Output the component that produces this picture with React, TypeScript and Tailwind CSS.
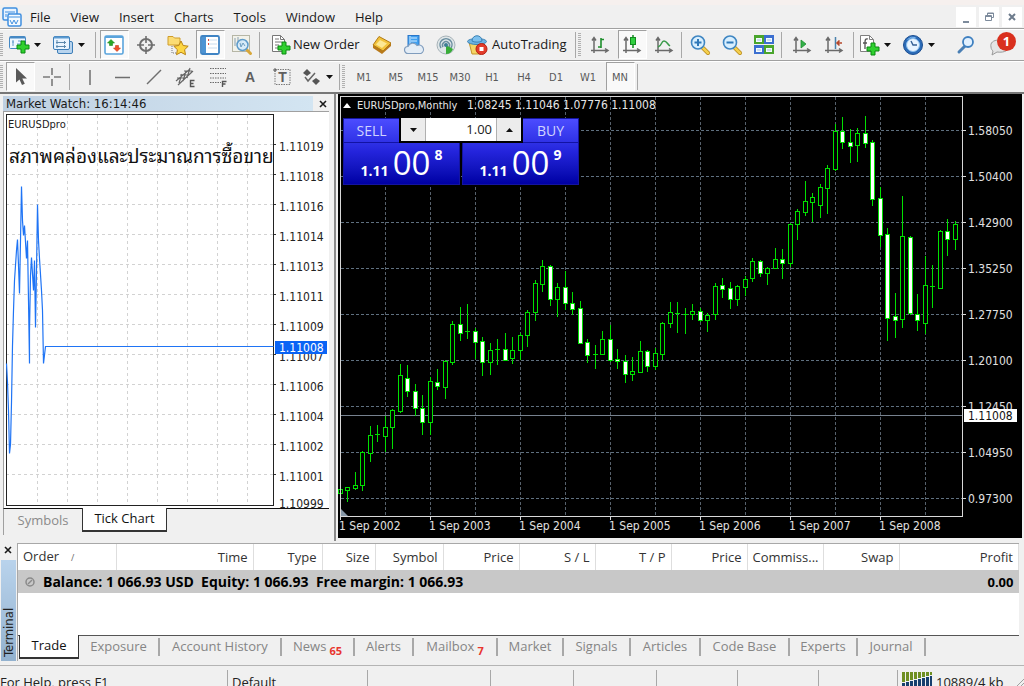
import React from 'react';

const UI_FONT = "font-['Open_Sans','Noto_Sans',sans-serif]";
const CHART_FONT = "font-['DejaVu_Sans_Condensed','DejaVu_Sans','Noto_Sans',sans-serif]";

type CandleKind = 'up' | 'down' | 'doji';
type Candle = [high: number, top: number, bottom: number, low: number, kind: CandleKind];

const candles: Candle[] = [
  [483, 489, 493, 505, 'up'],
  [487, 487, 490, 502, 'up'],
  [472, 485, 488, 490, 'up'],
  [451, 452, 485, 491, 'up'],
  [426, 435, 453, 462, 'up'],
  [425, 434, 435, 442, 'doji'],
  [416, 427, 436, 452, 'up'],
  [409, 410, 427, 449, 'up'],
  [364, 375, 411, 413, 'up'],
  [365, 378, 391, 397, 'down'],
  [384, 391, 408, 416, 'down'],
  [395, 408, 422, 435, 'down'],
  [377, 381, 422, 435, 'up'],
  [369, 382, 386, 390, 'down'],
  [360, 361, 387, 399, 'up'],
  [321, 324, 362, 365, 'up'],
  [307, 324, 333, 341, 'down'],
  [304, 331, 332, 339, 'doji'],
  [328, 331, 342, 359, 'down'],
  [337, 341, 362, 376, 'down'],
  [343, 350, 362, 375, 'up'],
  [339, 349, 350, 365, 'doji'],
  [333, 349, 360, 361, 'down'],
  [337, 350, 358, 364, 'up'],
  [333, 335, 350, 360, 'up'],
  [310, 312, 335, 347, 'up'],
  [280, 283, 312, 321, 'up'],
  [260, 266, 284, 292, 'up'],
  [265, 266, 299, 306, 'down'],
  [283, 287, 299, 317, 'up'],
  [271, 287, 303, 310, 'down'],
  [292, 303, 309, 315, 'down'],
  [301, 308, 343, 344, 'down'],
  [339, 342, 355, 363, 'down'],
  [345, 354, 355, 369, 'doji'],
  [331, 339, 354, 354, 'up'],
  [325, 339, 360, 362, 'down'],
  [349, 359, 361, 369, 'down'],
  [355, 361, 374, 383, 'down'],
  [357, 371, 374, 381, 'up'],
  [341, 351, 372, 373, 'up'],
  [350, 351, 366, 372, 'down'],
  [348, 353, 366, 370, 'up'],
  [322, 323, 354, 360, 'up'],
  [302, 312, 323, 328, 'up'],
  [302, 313, 314, 333, 'doji'],
  [308, 314, 315, 334, 'doji'],
  [304, 311, 314, 320, 'up'],
  [308, 311, 320, 322, 'down'],
  [313, 315, 320, 332, 'up'],
  [283, 286, 314, 320, 'up'],
  [278, 285, 289, 298, 'down'],
  [282, 288, 299, 309, 'down'],
  [285, 286, 299, 306, 'up'],
  [276, 279, 287, 296, 'up'],
  [258, 261, 278, 282, 'up'],
  [260, 261, 273, 277, 'down'],
  [267, 268, 273, 285, 'up'],
  [248, 259, 268, 269, 'up'],
  [249, 259, 263, 279, 'down'],
  [223, 224, 263, 267, 'up'],
  [209, 211, 224, 240, 'up'],
  [181, 201, 212, 216, 'up'],
  [193, 197, 202, 222, 'up'],
  [184, 187, 205, 218, 'up'],
  [165, 168, 188, 214, 'up'],
  [124, 131, 169, 171, 'up'],
  [117, 131, 142, 149, 'down'],
  [129, 142, 146, 163, 'down'],
  [128, 133, 145, 162, 'up'],
  [116, 133, 143, 148, 'down'],
  [140, 142, 199, 206, 'down'],
  [187, 198, 235, 247, 'down'],
  [228, 234, 318, 341, 'down'],
  [293, 316, 320, 338, 'down'],
  [196, 236, 319, 328, 'up'],
  [236, 237, 313, 315, 'down'],
  [294, 314, 320, 331, 'down'],
  [256, 285, 323, 334, 'up'],
  [265, 286, 287, 308, 'doji'],
  [230, 231, 288, 288, 'up'],
  [219, 231, 239, 256, 'down'],
  [221, 224, 239, 250, 'up'],
];

const priceLevels = ['1.58050', '1.50400', '1.42900', '1.35250', '1.27750', '1.20100', '1.12450', '1.04950', '0.97300'];
const years = [2002, 2003, 2004, 2005, 2006, 2007, 2008];

const tickLevels = [
  '1.11019', '1.11018', '1.11016', '1.11014', '1.11013', '1.11011',
  '1.11009', '1.11007', '1.11006', '1.11004', '1.11002', '1.11001',
];

const tickPoints =
  '2,251 3,270 4,298 5,341 6,332 7,290 8,233 9,198 10,168 12,138 13,127 14,153 15,181 16,128 17,74 18,108 19,123 20,113 22,146 23,128 24,188 25,251 25,218 26,163 27,145 29,178 30,148 31,215 32,158 33,92 34,128 35,146 37,178 38,198 39,251 41,234 269,234';

const columns = [
  { label: 'Order', width: 'w-[98px]' },
  { label: 'Time', width: 'w-[137px]' },
  { label: 'Type', width: 'w-[69px]' },
  { label: 'Size', width: 'w-[53px]' },
  { label: 'Symbol', width: 'w-[68px]' },
  { label: 'Price', width: 'w-[76px]' },
  { label: 'S / L', width: 'w-[76px]' },
  { label: 'T / P', width: 'w-[76px]' },
  { label: 'Price', width: 'w-[76px]' },
  { label: 'Commiss...', width: 'w-[76px]' },
  { label: 'Swap', width: 'w-[76px]' },
  { label: 'Profit', width: '' },
];

const terminalTabs = [
  { label: 'Exposure', width: 'w-[81px]' },
  { label: 'Account History', width: 'w-[122px]' },
  { label: 'News', width: 'w-[73px]', badge: '65' },
  { label: 'Alerts', width: 'w-[59px]' },
  { label: 'Mailbox', width: 'w-[84px]', badge: '7' },
  { label: 'Market', width: 'w-[66px]' },
  { label: 'Signals', width: 'w-[67px]' },
  { label: 'Articles', width: 'w-[70px]' },
  { label: 'Code Base', width: 'w-[89px]' },
  { label: 'Experts', width: 'w-[68px]' },
  { label: 'Journal', width: 'w-[68px]' },
];

/* ---------- icons ---------- */

interface IconProps {
  children: React.ReactNode;
}

const Icon: React.FC<IconProps> = ({ children }) => (
  <svg viewBox="0 0 22 22" className="w-[22px] h-[22px] shrink-0" fill="none" aria-hidden="true">
    {children}
  </svg>
);

const Plus = ({ x, y }: { x: number; y: number }) => (
  <path
    d={`M${x + 4} ${y}h4v4h4v4h-4v4h-4v-4h-4v-4h4z`}
    fill="#2fd02f"
    stroke="#0b8a12"
  />
);

const Axes = () => (
  <path d="M5 19V4M3 6.500l2-3 2 3M2 16.500h16M16 14.500l3 2-3 2" stroke="#6a6a6a" strokeWidth="1.5" />
);

const LogoIcon = () => (
  <svg viewBox="0 0 20 20" className="w-5 h-5" fill="none" aria-hidden="true">
    <rect x="1" y="1" width="14" height="12" rx="1.5" fill="#e8f3ff" stroke="#3f8fe0" strokeWidth="1.5" />
    <path d="M3 5h10M4 10V7M7 9V6" stroke="#3f8fe0" />
    <rect x="6" y="7" width="13" height="12" rx="1.5" fill="#f4faff" stroke="#3f8fe0" strokeWidth="1.5" />
    <path d="M7 10h11" stroke="#3f8fe0" />
    <path d="M8 13l2 4 2-4 2 4 2-4" stroke="#3f8fe0" />
  </svg>
);

const NewChartIcon = () => (
  <Icon>
    <rect x="1.5" y="2.5" width="16" height="12" rx="1" fill="#eef7ff" stroke="#4689c4" />
    <path d="M2 3.5h15" stroke="#4689c4" strokeWidth="2" />
    <path d="M5 6v6M4 8h2M10 7h4M9 10h4" stroke="#5f9acb" />
    <Plus x={9} y={7} />
  </Icon>
);

const ProfilesIcon = () => (
  <Icon>
    <rect x="5.5" y="7.5" width="15" height="12" rx="1.5" fill="#b8d4ee" stroke="#3f7fb8" />
    <rect x="1.5" y="2.5" width="16" height="13" rx="1.5" fill="#e9f4ff" stroke="#3f7fb8" />
    <path d="M2 3.500h15" stroke="#5a9ad0" strokeWidth="2" />
    <path d="M5 6v4M4 8.500h10M12.500 7v3M4 12.500h10M5 11v3M12.500 11v3" stroke="#5b88ad" />
  </Icon>
);

const MarketWatchIcon = () => (
  <Icon>
    <rect x="2" y="2" width="18" height="18" rx="1.5" fill="#fff" stroke="#5aa4dc" strokeWidth="1.6" />
    <path d="M2 3h18" stroke="#5aa4dc" strokeWidth="2" />
    <path d="M8 5.500l3.500 3.500L9.500 9v2.500h-3V9h-2z" fill="#28a828" stroke="#1c8a1c" strokeWidth=".6" />
    <path d="M14 17.500L10.500 14h2v-2.500h3V14h2z" fill="#f0502a" stroke="#c63a18" strokeWidth=".6" />
  </Icon>
);

const CrosshairIcon = () => (
  <Icon>
    <circle cx="11" cy="11" r="6" stroke="#6f6f6f" strokeWidth="2" />
    <path d="M11 2v7M11 13v7M2 11h7M13 11h7" stroke="#6f6f6f" strokeWidth="1.6" />
  </Icon>
);

const FolderStarIcon = () => (
  <Icon>
    <path d="M1 4V2.500h5L7.500 4H13v7H1z" fill="#fbdc74" stroke="#cf9c2a" />
    <path d="M5 12v7h4" stroke="#777" strokeDasharray="1 1" />
    <path d="M14 7l2.200 4.500 5 .7-3.600 3.500.9 5-4.500-2.400-4.500 2.400.9-5L6.800 12.200l5-.7z" fill="#fdd644" stroke="#b98312" />
  </Icon>
);

const NavigatorIcon = () => (
  <Icon>
    <rect x="2" y="2" width="18" height="18" rx="1.500" fill="#fff" stroke="#3f84c4" strokeWidth="1.800" />
    <rect x="3" y="3" width="4" height="16" fill="#4d94d4" />
    <path d="M9 6h9M9 10h9M9 14h9" stroke="#c9dced" />
    <path d="M9 6h1M9 10h1" stroke="#e04a3a" strokeWidth="2" />
  </Icon>
);

const TesterIcon = () => (
  <Icon>
    <rect x="1.500" y="1.500" width="17" height="16" fill="#f2f2ea" stroke="#b6b6a6" />
    <path d="M4 4v8M7 3v6M10 12V5" stroke="#8aa0b0" />
    <path d="M15.500 15.500l4 4" stroke="#d8a73a" strokeWidth="3" strokeLinecap="round" />
    <circle cx="11.500" cy="11" r="5.500" fill="#d4ebfb" fillOpacity=".85" stroke="#5d9bca" strokeWidth="1.500" />
    <path d="M9 9l1 4 2-4 2 3" stroke="#6c9dc0" />
  </Icon>
);

const NewOrderIcon = () => (
  <Icon>
    <path d="M2.500 1.500h8l4 4v12h-12z" fill="#fff" stroke="#777" />
    <path d="M10.500 1.500v4h4M5 5h4M5 8h7M5 11h4M5 14h3" stroke="#777" />
    <Plus x={8} y={8} />
  </Icon>
);

const MetaEditorIcon = () => (
  <Icon>
    <path d="M2 11v3l9 6 9-8v-3z" fill="#b8791a" />
    <path d="M8 2.500l12 6.500-8 8L2 11z" fill="#f2c33c" stroke="#b27b14" />
    <path d="M9 6l7 3.500-5 4.500-6-3.500z" fill="#fce894" />
  </Icon>
);

const CloudIcon = () => (
  <Icon>
    <rect x="5" y="1.500" width="11" height="11" fill="#3fa0f0" stroke="#2a76c8" />
    <path d="M8 4h6M8 7h6M7 2v10" stroke="#d5ebff" />
    <path d="M5 19.500a3.500 3.500 0 010-7 5 5 0 019-1 4 4 0 014 8z" fill="#e4edf6" stroke="#7f9cbd" strokeWidth="1.200" />
  </Icon>
);

const SignalIcon = () => (
  <Icon>
    <circle cx="11" cy="11" r="9" fill="#dfe6e8" stroke="#a6b2b8" />
    <path d="M6 14a6 6 0 1110 0" stroke="#6b8ea0" strokeWidth="1.500" />
    <path d="M8 13a3.500 3.500 0 116 0" stroke="#6b8ea0" strokeWidth="1.500" />
    <path d="M11 11l7 4c-1 3-4 5-7 5z" fill="#38ad38" />
    <circle cx="11" cy="11" r="2" fill="#3d7d94" />
  </Icon>
);

const AutoTradingIcon = () => (
  <Icon>
    <path d="M3 8l3 12h9l3-12z" fill="#f5d565" stroke="#c4952a" />
    <ellipse cx="11" cy="7.500" rx="9.500" ry="3" fill="#6eb4e4" stroke="#3c82b4" />
    <path d="M6 7c0-7 10-7 10 0-2 1.500-8 1.500-10 0z" fill="#7cc0ee" stroke="#3c82b4" />
    <circle cx="15.500" cy="15" r="5.500" fill="#e23b2a" stroke="#b52315" />
    <rect x="13.500" y="13" width="4" height="4" fill="#fff" />
  </Icon>
);

const BarChartIcon = () => (
  <Icon>
    <Axes />
    <path d="M12 4v10M9 13h3M12 5.500h3" stroke="#1f8f2d" strokeWidth="1.600" />
  </Icon>
);

const CandleChartIcon = () => (
  <Icon>
    <Axes />
    <path d="M12 1v13" stroke="#138a20" strokeWidth="1.500" />
    <rect x="9.500" y="3.500" width="5" height="7" fill="#2fd03f" stroke="#138a20" />
  </Icon>
);

const LineChartIcon = () => (
  <Icon>
    <Axes />
    <path d="M5 13c4-1 3-6 6-6s3 3 6 5" stroke="#3a9a4a" strokeWidth="1.500" />
  </Icon>
);

const MagnifierIcon = ({ plus }: { plus?: boolean }) => (
  <Icon>
    <path d="M14 14l5 5" stroke="#b88a1c" strokeWidth="4" strokeLinecap="round" />
    <path d="M14 14l5 5" stroke="#f4cf4e" strokeWidth="2.500" strokeLinecap="round" />
    <circle cx="9" cy="8.500" r="6.500" fill="#d8efff" stroke="#3f86c2" strokeWidth="1.600" />
    <path d={plus ? 'M5.500 8.500h7M9 5v7' : 'M5.500 8.500h7'} stroke="#2f78b8" strokeWidth="2" />
  </Icon>
);

const TileIcon = () => (
  <Icon>
    <rect x="1" y="1" width="10" height="9" fill="#4aa52c" />
    <rect x="11" y="1" width="10" height="9" fill="#3c6fd0" />
    <rect x="1" y="11" width="10" height="9" fill="#3c6fd0" />
    <rect x="11" y="11" width="10" height="9" fill="#4aa52c" />
    <path d="M3 4h6v4H3zM13 4h6v4h-6zM3 14h6v4H3zM13 14h6v4h-6z" fill="#f4fbff" />
    <path d="M4 6h4M14 6h4M4 16h4M14 16h4" stroke="#a9c4dd" />
  </Icon>
);

const AutoScrollIcon = () => (
  <Icon>
    <Axes />
    <path d="M10 6l5 4-5 4z" fill="#33b04a" stroke="#1f8f2d" strokeWidth=".8" />
  </Icon>
);

const ShiftIcon = () => (
  <Icon>
    <Axes />
    <path d="M12.500 3v12" stroke="#4a82ac" strokeWidth="1.500" />
    <path d="M19 9h-5M16.500 6.500L14 9l2.500 2.500" stroke="#b5472a" strokeWidth="1.600" />
  </Icon>
);

const IndicatorsIcon = () => (
  <Icon>
    <path d="M2.500 1.500h9l4 4v12h-13z" fill="#fff" stroke="#808080" />
    <path d="M11.500 1.500v4h4" stroke="#808080" />
    <path d="M10 5c-3-1-3 2-3 4v6M5 9h4" stroke="#555" strokeWidth="1.300" />
    <Plus x={9} y={9} />
  </Icon>
);

const ClockIcon = () => (
  <Icon>
    <circle cx="11" cy="11" r="9.500" fill="#2c6cb8" stroke="#1c4f92" />
    <circle cx="11" cy="11" r="6.500" fill="#e9f4ff" stroke="#8cc0ee" />
    <path d="M9 7l2 4h4" stroke="#355f94" strokeWidth="1.400" />
    <path d="M5.500 5.500a8 8 0 018-2" stroke="#79b4ee" />
  </Icon>
);

const SearchIcon = () => (
  <Icon>
    <path d="M10 12l-6 6" stroke="#4a7fb4" strokeWidth="3" strokeLinecap="round" />
    <circle cx="13" cy="8" r="5" fill="#e2f1ff" stroke="#3f80c0" strokeWidth="1.800" />
  </Icon>
);

const CursorIcon = () => (
  <Icon>
    <path d="M6 2v14.500l3.500-3 2.500 5.500 2.800-1.300-2.500-5.200H17z" fill="#595959" />
  </Icon>
);

const ThinCrossIcon = () => (
  <Icon>
    <path d="M11 2v7M11 13v7M2 11h7M13 11h7" stroke="#7a7a7a" strokeWidth="1.600" />
  </Icon>
);

const VLineIcon = () => (
  <Icon>
    <path d="M11 4v15" stroke="#6f6f6f" strokeWidth="1.500" />
  </Icon>
);

const HLineIcon = () => (
  <Icon>
    <path d="M4 11.500h15" stroke="#6f6f6f" strokeWidth="1.500" />
  </Icon>
);

const TrendIcon = () => (
  <Icon>
    <path d="M4 18L18 4" stroke="#6f6f6f" strokeWidth="1.500" />
  </Icon>
);

const ChannelIcon = () => (
  <Icon>
    <path d="M1 15L15 3M3 19L18 5M2 12h8M5 9h9M9 5h8M4 17l3-9M8 15l3-10M12 12l3-10" stroke="#666" strokeWidth="1.200" />
    <path d="M19.500 14.500h-4v6h4M15.500 17.500h3" stroke="#555" strokeWidth="1.400" />
  </Icon>
);

const FiboIcon = () => (
  <Icon>
    <path d="M3 2.500h16M3 7.500h16M3 12h16M3 16.500h11" stroke="#6a6a6a" strokeWidth="1.200" strokeDasharray="1.500 1" />
    <path d="M19.500 15.500h-4v5.500M15.500 18h3" stroke="#555" strokeWidth="1.400" />
  </Icon>
);

const TextIcon = () => (
  <Icon>
    <text x="11" y="16" textAnchor="middle" className="fill-[#5f5f5f] text-[14px] font-bold font-['Liberation_Sans',sans-serif]">A</text>
  </Icon>
);

const TextLabelIcon = () => (
  <Icon>
    <rect x="4" y="3.500" width="15" height="15" stroke="#7a7a7a" strokeDasharray="1.500 1" />
    <path d="M2 4h4M4 2v4" stroke="#5f5f5f" />
    <text x="11.500" y="16" textAnchor="middle" className="fill-[#5f5f5f] text-[14px] font-bold font-['Liberation_Sans',sans-serif]">T</text>
  </Icon>
);

const ArrowsIcon = () => (
  <Icon>
    <path d="M3 7l4-4 4 4-4 3z" fill="#555" />
    <path d="M12 15l4-3 4 3-4 4z" fill="#555" />
    <path d="M5 11l3 4 7-8" stroke="#666" strokeWidth="1.500" />
  </Icon>
);

const CloseIcon = () => (
  <svg viewBox="0 0 8 8" className="w-2 h-2" aria-hidden="true">
    <path d="M1 1l6 6M7 1L1 7" stroke="#1a1a1a" strokeWidth="1.600" />
  </svg>
);

/* ---------- toolbar pieces ---------- */

const Grip = () => (
  <div className="w-[3px] h-6 mr-[3px] shrink-0 bg-[repeating-linear-gradient(#b0b0b0_0_1px,transparent_1px_2px)]" />
);

const Separator = () => <div className="w-px h-[26px] ml-px mr-[2px] shrink-0 bg-[#a8a8a8]" />;

interface ToolButtonProps {
  label: string;
  active?: boolean;
  children: React.ReactNode;
}

const ToolButton: React.FC<ToolButtonProps> = ({ label, active = false, children }) => (
  <div className="w-8 flex justify-center shrink-0">
    <button
      aria-label={label}
      aria-pressed={active}
      className={`w-[29px] h-[29px] flex items-center justify-center border ${
        active ? 'bg-[#f9f9f9] border-[#a0a0a0] border-b-white border-r-white' : 'border-transparent'
      }`}
    >
      {children}
    </button>
  </div>
);

interface DropButtonProps {
  label: string;
  className?: string;
  children: React.ReactNode;
}

const DropButton: React.FC<DropButtonProps> = ({ label, className = 'mr-1', children }) => (
  <button aria-label={label} className={`w-10 h-[29px] pl-[2px] flex items-center gap-1 shrink-0 ${className}`}>
    {children}
    <svg viewBox="0 0 7 4" className="w-[7px] h-1" aria-hidden="true">
      <path d="M0 0h7L3.500 4z" fill="#111" />
    </svg>
  </button>
);

const MenuBar = () => (
  <header className="border-t-[5px] border-[#f6f0ee] flex items-center h-[28px] pl-[2px] pr-[2px]">
    <LogoIcon />
    <nav className="flex text-[13px] leading-5 text-[#1a1a1a] pl-2 gap-5">
      {['File', 'View', 'Insert', 'Charts', 'Tools', 'Window', 'Help'].map(item => (
        <button key={item}>{item}</button>
      ))}
    </nav>
    <div className="ml-auto flex gap-[3px]">
      <button aria-label="Minimize" className="w-5 h-5 bg-white flex items-end justify-center pb-1">
        <span className="w-[6px] h-[2px] bg-[#7d8b9c]" />
      </button>
      <button aria-label="Restore" className="w-5 h-5 bg-white flex items-center justify-center">
        <svg viewBox="0 0 9 9" className="w-[9px] h-[9px]" fill="none" stroke="#7d8b9c">
          <path d="M2.500 3V1h6v4.500H7M2.500 1.500h6M.5 3.500h6v5h-6zM.5 4.500h6" />
        </svg>
      </button>
      <button aria-label="Close window" className="w-5 h-5 bg-white flex items-center justify-center">
        <svg viewBox="0 0 8 8" className="w-2 h-2">
          <path d="M1 1l6 6M7 1L1 7" stroke="#6d7b8c" strokeWidth="2" />
        </svg>
      </button>
    </div>
  </header>
);

const MainToolbar = () => (
  <div className="border-t border-[#a0a0a0] shadow-[inset_0_1px_0_#fff] h-[32px] flex items-center">
    <Grip />
    <DropButton label="New chart"><NewChartIcon /></DropButton>
    <DropButton label="Profiles"><ProfilesIcon /></DropButton>
    <Separator />
    <ToolButton label="Market Watch" active><MarketWatchIcon /></ToolButton>
    <ToolButton label="Data Window"><CrosshairIcon /></ToolButton>
    <ToolButton label="Navigator"><FolderStarIcon /></ToolButton>
    <ToolButton label="Terminal" active><NavigatorIcon /></ToolButton>
    <ToolButton label="Strategy Tester"><TesterIcon /></ToolButton>
    <Separator />
    <button className="w-[104px] h-[29px] pl-2 flex items-center gap-px shrink-0 whitespace-nowrap text-[13px]">
      <NewOrderIcon />
      New Order
    </button>
    <ToolButton label="MetaEditor"><MetaEditorIcon /></ToolButton>
    <ToolButton label="Virtual hosting"><CloudIcon /></ToolButton>
    <ToolButton label="Signals"><SignalIcon /></ToolButton>
    <button className="w-[112px] h-[29px] pl-1 flex items-center gap-1 shrink-0 whitespace-nowrap text-[13px]">
      <AutoTradingIcon />
      AutoTrading
    </button>
    <Separator />
    <Grip />
    <ToolButton label="Bar chart"><BarChartIcon /></ToolButton>
    <ToolButton label="Candlesticks" active><CandleChartIcon /></ToolButton>
    <ToolButton label="Line chart"><LineChartIcon /></ToolButton>
    <Separator />
    <ToolButton label="Zoom in"><MagnifierIcon plus /></ToolButton>
    <ToolButton label="Zoom out"><MagnifierIcon /></ToolButton>
    <ToolButton label="Tile windows"><TileIcon /></ToolButton>
    <Separator />
    <div className="flex px-[2px]">
      <ToolButton label="Auto scroll"><AutoScrollIcon /></ToolButton>
      <ToolButton label="Chart shift"><ShiftIcon /></ToolButton>
    </div>
    <Separator />
    <DropButton label="Indicators"><IndicatorsIcon /></DropButton>
    <DropButton label="Periods"><ClockIcon /></DropButton>
    <div className="ml-auto flex items-center pr-[2px]">
      <ToolButton label="Search"><SearchIcon /></ToolButton>
      <button aria-label="Messages" className="relative w-9 h-[29px] ml-1">
        <svg viewBox="0 0 36 29" className="w-9 h-[29px]" aria-hidden="true">
          <path d="M13 10c-6 0-9 3-8 7 0 2 1 3 2 4l-1 4 5-3c8 1 12-2 12-6s-4-6-10-6z" fill="#e4e4e4" stroke="#9a9a9a" />
        </svg>
        <span className="absolute left-[11px] top-[2px] w-[19px] h-[19px] rounded-full bg-[#d9301e] text-white text-[13px] leading-[19px] font-bold text-center">
          1
        </span>
      </button>
    </div>
  </div>
);

const LineToolbar = () => (
  <div className="border-t border-[#a0a0a0] shadow-[inset_0_1px_0_#fff] h-8 flex items-center">
    <Grip />
    <div className="w-[30px] shrink-0">
      <button
        aria-label="Cursor"
        aria-pressed="true"
        className="w-[29px] h-[29px] flex items-center justify-center bg-[#f9f9f9] border border-[#a0a0a0] border-b-white border-r-white"
      >
        <CursorIcon />
      </button>
    </div>
    <ToolButton label="Crosshair"><ThinCrossIcon /></ToolButton>
    <Separator />
    <div className="flex pl-[2px]">
      <ToolButton label="Vertical line"><VLineIcon /></ToolButton>
      <ToolButton label="Horizontal line"><HLineIcon /></ToolButton>
      <ToolButton label="Trendline"><TrendIcon /></ToolButton>
      <ToolButton label="Equidistant channel"><ChannelIcon /></ToolButton>
      <ToolButton label="Fibonacci retracement"><FiboIcon /></ToolButton>
      <ToolButton label="Text"><TextIcon /></ToolButton>
      <ToolButton label="Text label"><TextLabelIcon /></ToolButton>
      <DropButton label="Arrows" className=""><ArrowsIcon /></DropButton>
    </div>
    <Separator />
    <Grip />
    {['M1', 'M5', 'M15', 'M30', 'H1', 'H4', 'D1', 'W1', 'MN'].map(frame => (
      <div key={frame} className="w-8 flex justify-center shrink-0">
        <button
          className={`${CHART_FONT} w-[29px] h-[29px] pt-[3px] text-[11px] text-[#5a5a5a] border ${
            frame === 'MN' ? 'bg-[#f9f9f9] border-[#a0a0a0] border-b-white border-r-white' : 'border-transparent'
          }`}
        >
          {frame}
        </button>
      </div>
    ))}
    <Separator />
  </div>
);

/* ---------- market watch ---------- */

const TickChart = () => (
  <svg className={`${CHART_FONT} w-full h-full block text-[12px]`} role="img" aria-label="EURUSDpro tick chart">
    <g shapeRendering="crispEdges">
      <g stroke="#d2d2d2" strokeDasharray="3 3">
        {[33, 63, 93, 123, 153, 183, 213, 243].map(x => (
          <path key={x} d={`M${x}.5 3V392`} />
        ))}
        {tickLevels.map((level, i) => (
          <path key={level} d={`M2 ${32 + i * 30}.5H269`} />
        ))}
      </g>
      {tickLevels.map((level, i) => (
        <path key={level} d={`M269 ${32 + i * 30}.5h3`} stroke="#333" />
      ))}
      <rect x="2.5" y="2.5" width="267" height="391" fill="none" stroke="#222" />
    </g>
    <polyline points={tickPoints} fill="none" stroke="#1f74f5" strokeWidth="1.2" transform="translate(.5 .5)" />
    <text x="4" y="16" className="fill-[#222] text-[11px]">EURUSDpro</text>
    <text x="5" y="51" className="fill-[#111] text-[19px] font-['Noto_Sans_Thai_Looped','Noto_Sans_Thai','Noto_Sans',sans-serif]">
      สภาพคล่องและประมาณการซื้อขาย
    </text>
    {tickLevels.map((level, i) => (
      <text key={level} x="275" y={39 + i * 30} className="fill-[#222]">{level}</text>
    ))}
    <text x="275" y="396" className="fill-[#222]">1.10999</text>
    <rect x="271" y="229" width="52" height="13" fill="#0a64f5" />
    <text x="275" y="240" fill="#fff">1.11008</text>
  </svg>
);

const MarketWatch = () => (
  <section className="w-[336px] shrink-0 flex flex-col pl-[3px] pr-[5px] pt-[2px] border-r-2 border-[#8a8a8a]">
    <div className="flex items-center">
      <h2 className={`${CHART_FONT} flex-1 h-[15px] pl-[3px] text-[13px] leading-[15px] text-[#1a1a1a] bg-linear-to-r from-[#bfd0e2] to-[#d3e5f2]`}>
        Market Watch: 16:14:46
      </h2>
      <button aria-label="Close Market Watch" className="w-3 ml-1 flex justify-center">
        <CloseIcon />
      </button>
    </div>
    <div className="flex-1 min-h-0 border-t border-l border-[#a0a0a0] bg-white border-b border-b-[#111]">
      <TickChart />
    </div>
    <div className="flex h-[26px] mb-[6px] text-[13px] border-l border-[#a0a0a0]">
      <button className="w-[78px] h-6 text-[#8a8a8a]">Symbols</button>
      <button className="w-[85px] h-6 -mt-px bg-white border border-t-0 border-b-2 border-[#333] text-[#111]">Tick Chart</button>
    </div>
  </section>
);

/* ---------- price chart ---------- */

const CANDLE_STEP = 7.5;
const CHART_TOP = 94;

const CandleShape = ({ candle, index }: { candle: Candle; index: number }) => {
  const [high, top, bottom, low, kind] = candle;
  const x = Math.floor(2 + index * CANDLE_STEP);
  return (
    <g fill="#00e000">
      <rect x={x} y={high} width="1" height={low - high} />
      <rect x={x - 2} y={top} width="5" height={bottom - top + (kind === 'doji' ? 0 : 1)} />
      {kind !== 'doji' && (
        <rect x={x - 1} y={top + 1} width="3" height={bottom - top - 1} fill={kind === 'down' ? '#fff' : '#000'} />
      )}
    </g>
  );
};

const PriceChart = () => (
  <svg className={`${CHART_FONT} w-full h-full block text-[12px]`} role="img" aria-label="EURUSDpro monthly candlesticks">
    <g shapeRendering="crispEdges">
      <g strokeDasharray="3 2">
        {Array.from({ length: 13 }, (_, i) => (
          <path key={i} d={`M${47 + i * 45}.5 3V421`} stroke="#56616c" />
        ))}
        {priceLevels.map((level, i) => (
          <path key={level} d={`M3 ${36 + i * 46}.5H624`} stroke="#5f7080" />
        ))}
      </g>
      <path d="M2 321.500H624" stroke="#77828f" />
      <g transform={`translate(0 ${-CHART_TOP})`}>
        {candles.map((candle, i) => (
          <CandleShape key={i} candle={candle} index={i} />
        ))}
      </g>
      <path d="M2.500 2.500H624.500V422.500H2.500z" fill="none" stroke="#d8d8d8" />
      {priceLevels.map((level, i) => (
        <path key={level} d={`M625 ${36 + i * 46}.5h3`} stroke="#d8d8d8" />
      ))}
      {years.map((year, i) => (
        <path key={year} d={`M${2 + i * 90}.5 422v4`} stroke="#d8d8d8" />
      ))}
    </g>
    <path d="M3 415v7h7z" fill="#8798a8" />
    <path d="M5 14l4-5 4 5z" fill="#fff" />
    <text x="19" y="15" className="fill-[#e6e6e6] text-[11px]">EURUSDpro,Monthly</text>
    <text x="129" y="15" className="fill-[#e6e6e6]">1.08245 1.11046 1.07776 1.11008</text>
    {priceLevels.map((level, i) => (
      <text key={level} x="630" y={41 + i * 46} className="fill-[#e0e0e0]">{level}</text>
    ))}
    <rect x="626" y="315" width="53" height="13" fill="#fff" />
    <text x="630" y="326" fill="#111">1.11008</text>
    {years.map((year, i) => (
      <text key={year} x={1 + i * 90} y="436" className="fill-[#e0e0e0]">1 Sep {year}</text>
    ))}
  </svg>
);

interface DealButtonProps {
  side: string;
  point: string;
  align: string;
}

const DealButton: React.FC<DealButtonProps> = ({ side, point, align }) => (
  <button className={`w-[117px] h-[67px] flex flex-col border border-[#1414a0] bg-linear-to-b from-[#4c4cff] via-[#2424dc] to-[#0000a4] ${align}`}>
    <span className="w-[55px] h-6 text-[14px] leading-6 text-[#d0d4ff] text-center border-b border-[#1212a4]">{side}</span>
    <span className="w-full flex-1 flex justify-center gap-1 text-white font-bold">
      <span className="text-[14px] leading-[56px]">1.11</span>
      <span className="text-[33px] leading-10 font-normal">00</span>
      <span className="text-[14px] leading-6">{point}</span>
    </span>
  </button>
);

const TradePanel = () => (
  <div className="absolute left-[5px] top-6 flex gap-[2px]">
    <DealButton side="SELL" point="8" align="items-start" />
    <DealButton side="BUY" point="9" align="items-end" />
    <div className="absolute left-[56px] top-0 w-[124px] h-[25px] border-2 border-t-0 border-black bg-[#ececec] flex text-[13px] text-[#222]">
      <button aria-label="Decrease volume" className="w-6 flex items-center justify-center">
        <svg viewBox="0 0 7 4" className="w-[7px] h-1"><path d="M0 0h7L3.500 4z" fill="#111" /></svg>
      </button>
      <input
        aria-label="Volume"
        defaultValue="1.00"
        className="flex-1 min-w-0 bg-white border-x border-[#b0b0b0] text-right pr-1 outline-none"
      />
      <button aria-label="Increase volume" className="w-6 flex items-center justify-center">
        <svg viewBox="0 0 7 4" className="w-[7px] h-1"><path d="M0 4h7L3.500 0z" fill="#111" /></svg>
      </button>
    </div>
  </div>
);

/* ---------- terminal ---------- */

const Terminal = () => (
  <section className="flex shrink-0 pr-[5px] pt-[2px] pb-1">
    <div className="w-[17px] flex flex-col items-center pr-px">
      <button aria-label="Close Terminal" className="h-[13px] flex items-center">
        <CloseIcon />
      </button>
      <h2 className={`${CHART_FONT} mt-1 flex-1 w-[15px] flex items-center justify-start pt-1 text-[13px] leading-[15px] text-[#222] bg-linear-to-t from-[#b9d3ec] to-[#93b2cf] [writing-mode:vertical-rl] rotate-180`}>
        Terminal
      </h2>
    </div>
    <div className="flex-1 min-w-0 border-l border-t border-[#a8a8a8]">
      <div className="bg-white h-[91px]">
        <table className="w-full table-fixed border-collapse text-[13px] text-[#333]">
          <thead>
            <tr className="h-6">
              {columns.map(({ label, width }, i) => (
                <th
                  key={i}
                  scope="col"
                  className={`${width} ${i === 0 ? 'text-left' : 'text-right'} px-[5px] py-0 leading-6 font-normal whitespace-nowrap overflow-hidden border-r border-[#dedede]`}
                >
                  {label}
                  {i === 0 && <span className="pl-3 text-[9px] text-[#666]">/</span>}
                </th>
              ))}
            </tr>
          </thead>
          <tbody>
            <tr className="h-[23px] bg-[#c8c8c8] text-black font-bold">
              <td colSpan={11} className="px-[7px] py-0 whitespace-pre text-[14px] leading-[22px]">
                <div className="flex items-center gap-2">
                  <svg viewBox="0 0 10 10" className="w-[10px] h-[10px]" fill="none" stroke="#8a8a8a" strokeWidth="1.500">
                    <circle cx="5" cy="5" r="4" />
                    <path d="M3 7l4-4" />
                  </svg>
                  <span>{'Balance: 1 066.93 USD  Equity: 1 066.93  Free margin: 1 066.93'}</span>
                </div>
              </td>
              <td className="px-[5px] py-0 text-right leading-[22px]">0.00</td>
            </tr>
          </tbody>
        </table>
      </div>
      <div className="flex h-[26px] border-t border-[#555] text-[13px] text-[#858585]">
        <button className="w-[60px] h-6 -mt-px ml-px shrink-0 bg-white border border-t-0 border-b-2 border-[#333] text-[#111]">Trade</button>
        {terminalTabs.map(({ label, width, badge }) => (
          <button key={label} className={`${width} h-[18px] mt-[2px] shrink-0 flex items-center justify-center gap-[3px] whitespace-nowrap border-r-2 border-[#a8a8a8]`}>
            {label}
            {badge && <span className="text-[11px] leading-3 pt-2 font-bold text-[#e8352e]">{badge}</span>}
          </button>
        ))}
      </div>
    </div>
  </section>
);

const StatusBar = () => (
  <footer className="h-[21px] shrink-0 overflow-hidden border-t border-[#b4b4b4] pt-1 flex items-start text-[13px] leading-6 text-[#222] whitespace-nowrap">
    <div className="w-[228px] border-r border-[#a8a8a8]">For Help, press F1</div>
    <div className="w-[140px] pl-1 border-r border-[#a8a8a8]">Default</div>
    <div className="w-[123px] h-6 border-r border-[#a8a8a8]" />
    <div className="w-[83px] h-6 border-r border-[#a8a8a8]" />
    <div className="w-[83px] h-6 border-r border-[#a8a8a8]" />
    <div className="w-[81px] h-6 border-r border-[#a8a8a8]" />
    <div className="w-[81px] h-6 border-r border-[#a8a8a8]" />
    <div className="w-[79px] h-6 border-r border-[#a8a8a8]" />
    <div className="flex-1 flex gap-1 pl-1">
      <svg viewBox="0 0 30 18" className="w-[30px] h-[18px] mt-[2px] shrink-0" aria-hidden="true">
        {Array.from({ length: 8 }, (_, i) => (
          <React.Fragment key={i}>
            <rect x={i * 4} y="0" width="3" height={10 - i} fill="#6f8f22" />
            <rect x={i * 4} y={11 - i} width="3" height="14" fill="#173f6e" />
          </React.Fragment>
        ))}
      </svg>
      <span>10889/4 kb</span>
      <svg viewBox="0 0 12 18" className="w-3 h-[18px] ml-auto" aria-hidden="true">
        <path d="M3 18l9-9M7 18l5-5" stroke="#a0a0a0" />
      </svg>
    </div>
  </footer>
);

const App: React.FC = () => (
  <div className={`${UI_FONT} h-screen flex flex-col overflow-hidden bg-[#f0f0f0] text-[#1a1a1a]`}>
    <MenuBar />
    <MainToolbar />
    <LineToolbar />
    <main className="flex-1 min-h-0 flex border-t-2 border-[#777]">
      <MarketWatch />
      <section className="relative flex-1 min-w-0 ml-[2px] mr-[2px] mb-[3px] bg-black">
        <PriceChart />
        <TradePanel />
      </section>
    </main>
    <Terminal />
    <StatusBar />
  </div>
);

export default App;
